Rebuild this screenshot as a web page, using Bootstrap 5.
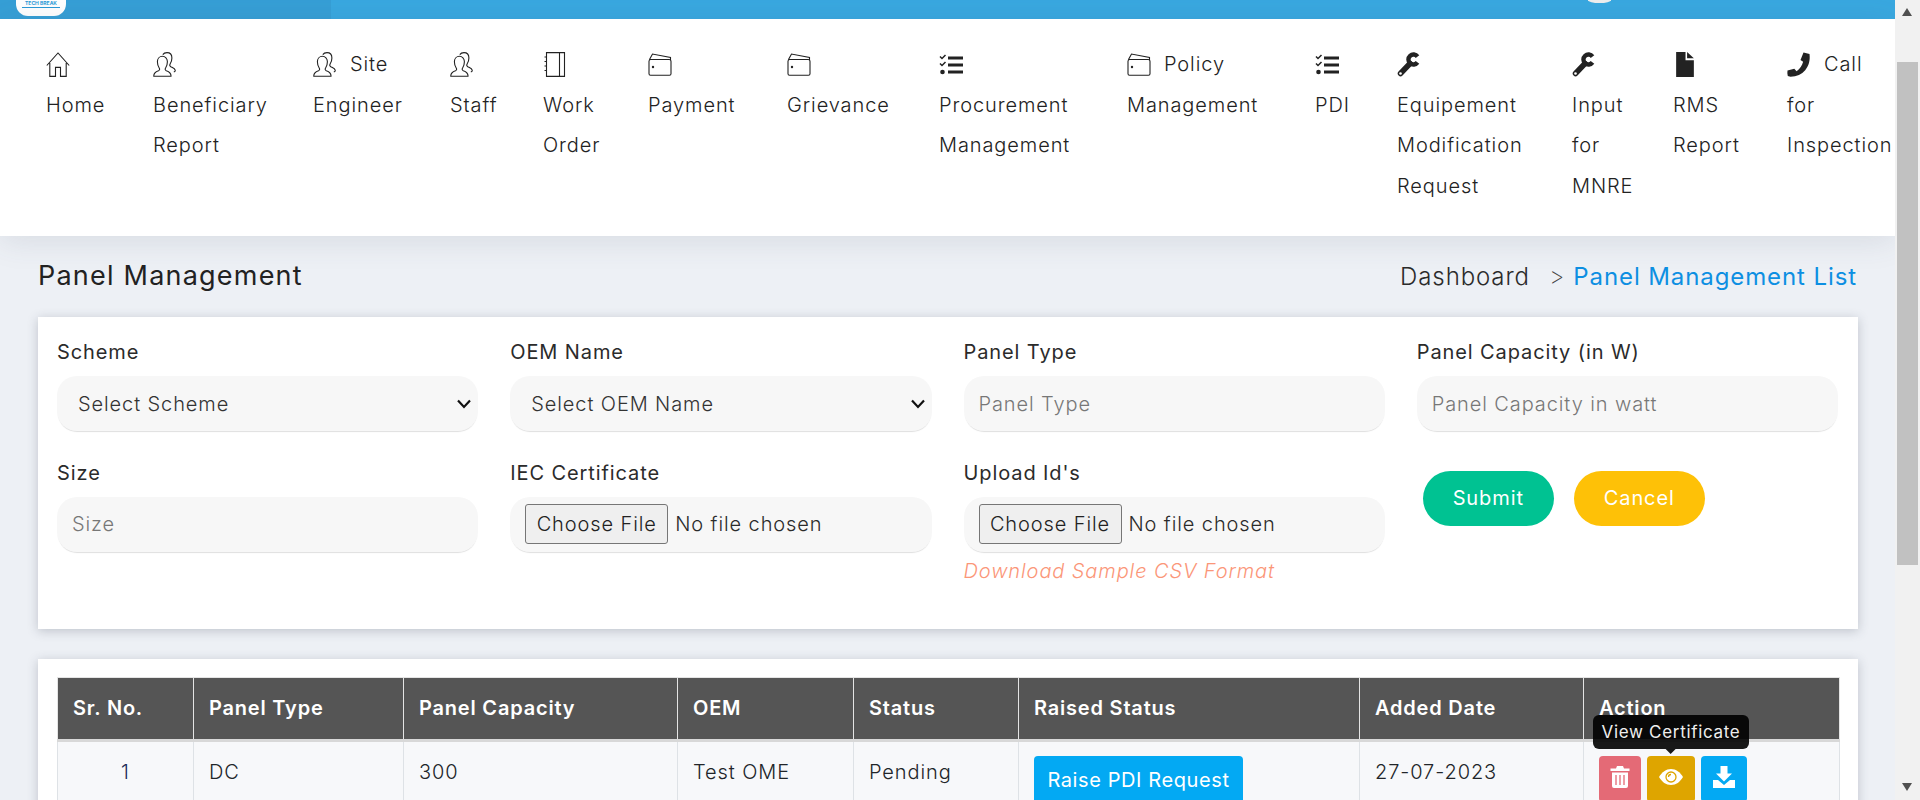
<!DOCTYPE html>
<html lang="en">
<head>
  <meta charset="UTF-8" />
  <meta name="viewport" content="width=device-width, initial-scale=1.0"/>
  <title>Panel Management</title>
  <link href="https://cdn.jsdelivr.net/npm/bootstrap@5.3.0/dist/css/bootstrap.min.css" rel="stylesheet"/>

  <style>
    html, body { height: 800px; overflow: hidden; }
    body {
      font-family: Inter, "Liberation Sans", sans-serif;
      font-weight: 300;
      font-size: 20px;
      letter-spacing: .045em;
      color: #2b2b2b;
      background: #edf0f5;
    }
    .app-main { width: 1895px; height: 800px; overflow: hidden; flex: none; }

    /* fake browser scrollbar, page was scrolled in the picture */
    .fake-scroll { width: 25px; height: 800px; background: #f1f1f1; padding: 8px 0 9px; }
    .fake-thumb { width: 21px; height: 503px; background: #c1c1c1; margin: 46px 0 0 2px; }
    .tri-up, .tri-down { width: 0; height: 0; margin-left: 7px; border-left: 5px solid transparent; border-right: 5px solid transparent; }
    .tri-up { border-bottom: 8px solid #505050; }
    .tri-down { border-top: 8px solid #505050; }

    .top-strip { height: 19px; background: #39a8e0; }
    .top-left { width: 331px; background: #369fd6; padding-left: 16px; }
    .logo-tab { width: 50px; height: 16px; background: #fff; border-radius: 0 0 12px 12px; text-align: center; color: #2a9ad6; font-size: 5px; font-weight: 700; line-height: 7px; letter-spacing: 0; }
    .logo-tab hr { margin: 0 6px; border: 0; border-top: 1px solid #2a9ad6; opacity: 1; }
    .avatar-edge { width: 23px; height: 3px; margin-left: 1257px; background: #eee; border-radius: 0 0 12px 12px / 0 0 3px 3px; }

    .main-menu {
      display: grid;
      grid-template-columns: 107px 160px 137px 93px 105px 139px 152px 188px 188px 82px 175px 101px 114px 108px;
      height: 217px;
      padding: 25px 0 0 46px;
      background: #fff;
      box-shadow: 0 4px 30px rgba(60, 75, 100, .13);
      position: relative;
    }
    .main-menu .nav-link { padding: 0; color: #222; line-height: 40.5px; white-space: nowrap; }
    .menu-ico { width: 24px; height: 25px; vertical-align: -6px; margin-right: 13px; color: #222; }

    .title-row { height: 81px; padding: 0 38px; }
    .page-title { font-size: 27px; font-weight: 400; margin: 0; color: #222; letter-spacing: .045em; }
    .crumbs { --bs-breadcrumb-divider: '>'; --bs-breadcrumb-margin-bottom: 0; font-size: 24px; }
    .crumbs .breadcrumb-item.active { color: #0d8fe2; font-weight: 400; padding-left: 19px; }
    .crumbs .breadcrumb-item + .breadcrumb-item::before { font-weight: 200; color: #444; padding-right: 8px; }

    .white-box { margin: 0 37px 30px 38px; padding: 18px 19px 20px; background: #fff; border: 0; border-radius: 0; box-shadow: 0 2px 10px rgba(50, 60, 80, .25); }
    .form-box { height: 312px; padding-top: 20px; }
    .form-box .row { --bs-gutter-x: 32px; width: 1813px; }
    .field-wrap { height: 120.5px; }
    .form-label { line-height: 27px; padding-top: 2px; margin-bottom: 10px; font-weight: 400; color: #2b2b2b; display: block; }
    .form-control, .form-select {
      height: 55px;
      background-color: #f7f7f7;
      border: 0;
      border-radius: 20px;
      box-shadow: 0 2px 1px -1px #dfdfdf;
      font-size: 20px;
      font-weight: 300;
      color: #333;
      letter-spacing: inherit;
    }
    .form-control { padding: 0 15px; }
    .form-control::placeholder { color: #777; }
    .form-select {
      padding: 0 40px 0 21px;
      background-image: url("data:image/svg+xml,%3csvg xmlns='http://www.w3.org/2000/svg' viewBox='0 0 16 12'%3e%3cpath fill='none' stroke='%23111' stroke-width='2.200' d='M2 2.500l6 6.500 6-6.500'/%3e%3c/svg%3e");
      background-position: right 6px center;
      background-size: 16px 12px;
    }
    .file-wrap { height: 55px; padding: 8px 15px; background: #f7f7f7; border-radius: 20px; box-shadow: 0 2px 1px -1px #dfdfdf; }
    .file-btn { width: 143px; height: 40px; padding: 0; background: #efefef; border: 1px solid #767676; border-radius: 3px; font-weight: 300; color: #222; font-size: 20px; letter-spacing: inherit; }
    .file-name { margin-left: 7px; font-weight: 300; }
    .csv-link { display: block; margin-top: 6px; line-height: 27px; color: #fb9678; font-style: italic; text-decoration: none; }
    .form-btns { padding: 13px 0 0 22px; gap: 20px; }
    .pill-btn { width: 131px; height: 55px; border: 0; border-radius: 28px; color: #fff; font-size: 20px; font-weight: 400; letter-spacing: inherit; }
    .pill-green, .pill-green:hover { background: #00c292; color: #fff; }
    .pill-amber, .pill-amber:hover { background: #fec107; color: #fff; }

    .table-box { padding-bottom: 0; height: 200px; }
    .panel-table { table-layout: fixed; width: 1782px; margin: 0; --bs-table-bg: #f7f8fa; border-color: #dee2e6; }
    .panel-table th { height: 63px; padding: 0 15px 2px; background: #555; color: #fff; font-weight: 600; vertical-align: middle; border: 1px solid #e4e4e4; border-bottom: 3px solid #d8d8d8; letter-spacing: .04em; }
    .panel-table td { height: 70px; padding: 15px 15px 0; font-weight: 300; vertical-align: top; line-height: 30px; }
    .panel-table td.act-cell, .panel-table td.raise-cell { padding-top: 14px; }
    .sr-cell { text-align: center; color: #1b2a55; }
    .c-sr { width: 136px; } .c-type { width: 210px; } .c-cap { width: 274px; } .c-oem { width: 176px; }
    .c-stat { width: 165px; } .c-raise { width: 341px; } .c-date { width: 224px; } .c-act { width: 256px; }
    .raise-btn { width: 209px; height: 48px; padding: 0; background: #03a9f3; color: #fff; border: 0; border-radius: 4px; font-size: 20px; font-weight: 400; letter-spacing: .03em; line-height: 44px; }
    .raise-btn:hover { background: #03a9f3; color: #fff; }
    .act-cell { white-space: nowrap; }
    .act-btn { height: 46px; padding: 0; border: 0; border-radius: 4px; color: #fff; display: inline-flex; justify-content: center; padding-top: 10px; position: relative; vertical-align: top; }
    .act-btn:hover { color: #fff; }
    .act-del, .act-del:hover { width: 42px; background: #e46a76; }
    .act-eye, .act-eye:hover { width: 48px; background: #dea500; margin: 0 6px; }
    .act-get, .act-get:hover { width: 46px; background: #03a9f3; }
    .act-ico { width: 24px; height: 22px; }

    .act-btn .tooltip { position: absolute; left: 50%; bottom: 100%; transform: translateX(-50%); margin: 0 0 7px; padding: 0; font-family: inherit; --bs-tooltip-font-size: 17px; letter-spacing: .04em; font-weight: 400; }
    .act-btn .tooltip-inner { width: 156px; height: 34px; padding: 0; line-height: 34px; max-width: none; white-space: nowrap; --bs-tooltip-bg: #000; }
    .act-btn .tooltip-arrow { position: absolute; left: 50%; bottom: -6px; transform: translateX(-50%); }
  </style>
</head>
<body class="d-flex">
  <svg width="0" height="0" class="position-absolute">
    <defs>
      <symbol id="i-home" viewBox="0 0 24 25">
        <path d="M.8 13.500 12 1 23.200 13.500M3.800 11v13.400h5.700v-9h5v9h5.700V11" fill="none" stroke="currentColor" stroke-width="1.100"/>
      </symbol>
      <symbol id="i-people" viewBox="0 0 24 25">
        <path d="M.8 24.200c-.2-2.900 1.600-4.300 4.700-5.400 1.100-.5 1.400-1.600.8-2.500C4.900 14.300 4.400 12.200 4.400 9.800c0-3.200 2.200-5.500 5-5.500s5 2.300 5 5.500c0 2.400-.6 4.500-1.900 6.500-.6.900-.3 2 .8 2.500 3.100 1.100 4.900 2.500 4.700 5.400z" fill="none" stroke="currentColor" stroke-width="1.100"/>
        <path d="M9.800 2.600C10.700 1.200 12.200.6 14 .6c2.900 0 4.900 2.200 4.900 5.300 0 2.400-.7 4.500-1.900 6.300-.6 1-.2 1.900.8 2.500 1.600.9 4 1.600 4.400 3.400.2 1-.5 1.700-1.400 1.700" fill="none" stroke="currentColor" stroke-width="1.100"/>
      </symbol>
      <symbol id="i-book" viewBox="0 0 24 25">
        <path d="M3.500.6h18v23.800h-18zM16.500.6v23.800M3.500 5h-2M3.500 9.500h-2M3.500 14h-2M3.500 18.500h-2" fill="none" stroke="currentColor" stroke-width="1.100"/>
      </symbol>
      <symbol id="i-wallet" viewBox="0 0 24 25">
        <path d="M1.500 7.500 4.500 2l18 3.500V8M2.800 7.500h18.200a2 2 0 0 1 2 2v12.300a1.500 1.500 0 0 1-1.500 1.500H2.500A1.500 1.500 0 0 1 1 21.800V9.300c0-1 .8-1.800 1.800-1.800z" fill="none" stroke="currentColor" stroke-width="1.100"/>
        <circle cx="5" cy="15" r="1.200" fill="currentColor"/>
      </symbol>
      <symbol id="i-tasks" viewBox="0 0 24 25">
        <path d="M9 4.500h15v3H9zM9 11.500h15v3H9zM9 18.500h15v3H9z" fill="currentColor"/>
        <path d="M1 4.500 3 6.500 6.500 3M1 11.500l2 2 3.500-3.500" fill="none" stroke="currentColor" stroke-width="1.500"/>
        <circle cx="3.500" cy="20" r="2.300" fill="currentColor"/>
      </symbol>
      <symbol id="i-wrench" viewBox="0 0 24 25">
        <path d="M3.500 21.500 13 11.500" fill="none" stroke="currentColor" stroke-width="5.500" stroke-linecap="round"/>
        <path d="M20.500 4.600A5 5 0 1 0 20.500 10.400" fill="none" stroke="currentColor" stroke-width="4.400"/>
        <circle cx="3.500" cy="21.500" r="1.300" fill="#fff"/>
      </symbol>
      <symbol id="i-file" viewBox="0 0 17 24">
        <path d="M0 0h9v8h8v16H0zM10.500 0 17 6h-6.500z" fill="currentColor"/>
      </symbol>
      <symbol id="i-phone" viewBox="0 0 24 25">
        <path d="M16.500.5 22.500 2c.9 6.500-.8 12-4.300 16.200C14.800 22.200 9.800 24.500 3.500 24.800L.8 24c-.5-1.800-.6-3.600-.3-5.500l6.800-1.800 2.300 2.600c3.400-2.500 5.500-5.700 6.500-9.600l-2.600-1.800z" fill="currentColor"/>
      </symbol>
      <symbol id="i-trash" viewBox="0 0 19 22">
        <path d="M6.500 0h6l1 2.500H19v2.500H0V2.500h5.500zM1.500 6.500h16V20a2 2 0 0 1-2 2h-12a2 2 0 0 1-2-2z" fill="currentColor"/>
        <path d="M5.500 9v10M9.500 9v10M13.500 9v10" stroke="#e46a76" stroke-width="1.300"/>
      </symbol>
      <symbol id="i-eye" viewBox="0 0 24 22">
        <path d="M0 11C3 6 7 3 12 3s9 3 12 8c-3 5-7 8-12 8S3 16 0 11z" fill="currentColor"/>
        <circle cx="12" cy="11" r="5" fill="none" stroke="#dea500" stroke-width="1.300"/>
        <path d="M9.500 11a2.500 2.500 0 0 1 2.500-2.500" fill="none" stroke="#dea500" stroke-width="1.300"/>
      </symbol>
      <symbol id="i-down" viewBox="0 0 24 22">
        <path d="M8.500 0h7v7.500h4.500L12 15.500 4 7.500h4.500zM1 14h5l6 5 6-5h5v8H1z" fill="currentColor"/>
      </symbol>
    </defs>
  </svg>

  <div class="app-main">
    <div class="top-strip d-flex">
      <div class="top-left">
        <div class="logo-tab">TECH BREAK<hr/></div>
      </div>
      <div class="avatar-edge"></div>
    </div>

    <ul class="nav main-menu">
      <li class="nav-item"><a class="nav-link" href="#"><svg class="menu-ico"><use href="#i-home"/></svg><br/>Home</a></li>
      <li class="nav-item"><a class="nav-link" href="#"><svg class="menu-ico"><use href="#i-people"/></svg><br/>Beneficiary<br/>Report</a></li>
      <li class="nav-item"><a class="nav-link" href="#"><svg class="menu-ico"><use href="#i-people"/></svg>Site<br/>Engineer</a></li>
      <li class="nav-item"><a class="nav-link" href="#"><svg class="menu-ico"><use href="#i-people"/></svg><br/>Staff</a></li>
      <li class="nav-item"><a class="nav-link" href="#"><svg class="menu-ico"><use href="#i-book"/></svg><br/>Work<br/>Order</a></li>
      <li class="nav-item"><a class="nav-link" href="#"><svg class="menu-ico"><use href="#i-wallet"/></svg><br/>Payment</a></li>
      <li class="nav-item"><a class="nav-link" href="#"><svg class="menu-ico"><use href="#i-wallet"/></svg><br/>Grievance</a></li>
      <li class="nav-item"><a class="nav-link" href="#"><svg class="menu-ico"><use href="#i-tasks"/></svg><br/>Procurement<br/>Management</a></li>
      <li class="nav-item"><a class="nav-link" href="#"><svg class="menu-ico"><use href="#i-wallet"/></svg>Policy<br/>Management</a></li>
      <li class="nav-item"><a class="nav-link" href="#"><svg class="menu-ico"><use href="#i-tasks"/></svg><br/>PDI</a></li>
      <li class="nav-item"><a class="nav-link" href="#"><svg class="menu-ico"><use href="#i-wrench"/></svg><br/>Equipement<br/>Modification<br/>Request</a></li>
      <li class="nav-item"><a class="nav-link" href="#"><svg class="menu-ico"><use href="#i-wrench"/></svg><br/>Input<br/>for<br/>MNRE</a></li>
      <li class="nav-item"><a class="nav-link" href="#"><svg class="menu-ico"><use href="#i-file"/></svg><br/>RMS<br/>Report</a></li>
      <li class="nav-item"><a class="nav-link" href="#"><svg class="menu-ico"><use href="#i-phone"/></svg>Call<br/>for<br/>Inspection</a></li>
    </ul>

    <div class="title-row d-flex justify-content-between align-items-center">
      <h4 class="page-title">Panel Management</h4>
      <ol class="breadcrumb crumbs">
        <li class="breadcrumb-item">Dashboard</li>
        <li class="breadcrumb-item active">Panel Management List</li>
      </ol>
    </div>

    <div class="card white-box form-box">
      <form class="row">
        <div class="col-3 field-wrap">
          <label class="form-label">Scheme</label>
          <select class="form-select"><option>Select Scheme</option></select>
        </div>
        <div class="col-3 field-wrap">
          <label class="form-label">OEM Name</label>
          <select class="form-select"><option>Select OEM Name</option></select>
        </div>
        <div class="col-3 field-wrap">
          <label class="form-label">Panel Type</label>
          <input type="text" class="form-control" placeholder="Panel Type"/>
        </div>
        <div class="col-3 field-wrap">
          <label class="form-label">Panel Capacity (in W)</label>
          <input type="text" class="form-control" placeholder="Panel Capacity in watt"/>
        </div>
        <div class="col-3 field-wrap">
          <label class="form-label">Size</label>
          <input type="text" class="form-control" placeholder="Size"/>
        </div>
        <div class="col-3 field-wrap">
          <label class="form-label">IEC Certificate</label>
          <div class="file-wrap d-flex align-items-center">
            <button type="button" class="file-btn">Choose File</button><span class="file-name">No file chosen</span>
          </div>
        </div>
        <div class="col-3 field-wrap">
          <label class="form-label">Upload Id's</label>
          <div class="file-wrap d-flex align-items-center">
            <button type="button" class="file-btn">Choose File</button><span class="file-name">No file chosen</span>
          </div>
          <a class="csv-link" href="#">Download Sample CSV Format</a>
        </div>
        <div class="col-3 field-wrap d-flex align-items-start form-btns">
          <button type="button" class="btn pill-btn pill-green">Submit</button>
          <button type="button" class="btn pill-btn pill-amber">Cancel</button>
        </div>
      </form>
    </div>

    <div class="card white-box table-box">
      <table class="table table-bordered panel-table">
        <colgroup>
          <col class="c-sr"/><col class="c-type"/><col class="c-cap"/><col class="c-oem"/>
          <col class="c-stat"/><col class="c-raise"/><col class="c-date"/><col class="c-act"/>
        </colgroup>
        <thead>
          <tr>
            <th>Sr. No.</th><th>Panel Type</th><th>Panel Capacity</th><th>OEM</th>
            <th>Status</th><th>Raised Status</th><th>Added Date</th><th>Action</th>
          </tr>
        </thead>
        <tbody>
          <tr>
            <td class="sr-cell">1</td>
            <td>DC</td>
            <td>300</td>
            <td>Test OME</td>
            <td>Pending</td>
            <td class="raise-cell"><button type="button" class="btn raise-btn">Raise PDI Request</button></td>
            <td>27-07-2023</td>
            <td class="act-cell">
              <button type="button" class="btn act-btn act-del"><svg class="act-ico"><use href="#i-trash"/></svg></button><button type="button" class="btn act-btn act-eye"><svg class="act-ico"><use href="#i-eye"/></svg>
                <span class="tooltip bs-tooltip-top show" role="tooltip"><span class="tooltip-arrow"></span><span class="tooltip-inner d-block">View Certificate</span></span>
              </button><button type="button" class="btn act-btn act-get"><svg class="act-ico"><use href="#i-down"/></svg></button>
            </td>
          </tr>
        </tbody>
      </table>
    </div>
  </div>

  <div class="fake-scroll d-flex flex-column">
    <div class="tri-up"></div>
    <div class="fake-thumb"></div>
    <div class="tri-down mt-auto"></div>
  </div>

  <script src="https://cdn.jsdelivr.net/npm/bootstrap@5.3.0/dist/js/bootstrap.bundle.min.js"></script>
</body>
</html>
